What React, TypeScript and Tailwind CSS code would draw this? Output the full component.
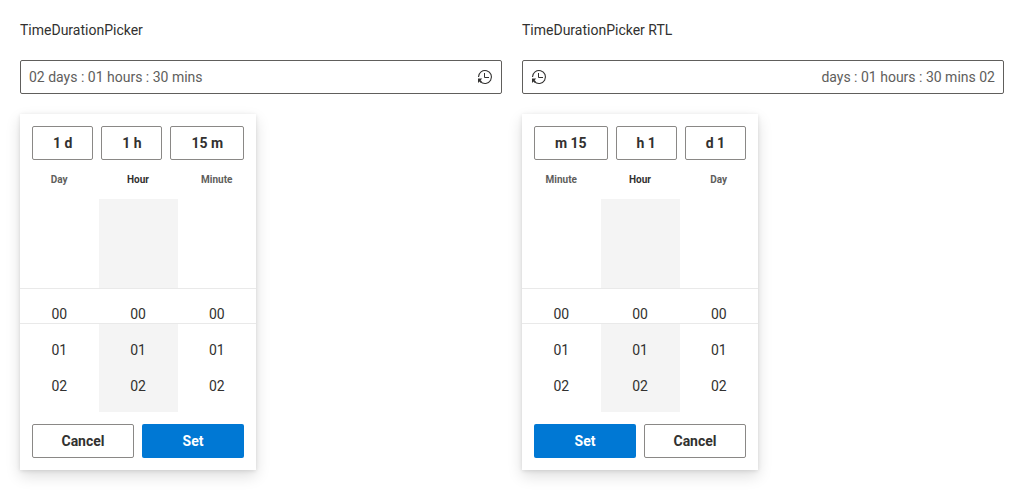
import { useId, useState } from 'react';
import clsx from 'clsx';

type Direction = 'ltr' | 'rtl';

const presets = ['1 d', '1 h', '15 m'];
const units = ['Day', 'Hour', 'Minute'];
const values = ['00', '01', '02'];

function DurationIcon() {
  return (
    <svg viewBox="0 0 16 16" className="size-4" fill="none" aria-hidden="true">
      <path d="M1.5 8A6.5 6.5 0 1 1 3.4 12.6" stroke="currentColor" strokeWidth="1.1" />
      <path d="M1 9.6V14l1.5-1.5 1.2 1.2 1.2-1.2-1.3-1.2L5.2 9.6z" fill="currentColor" />
      <path d="M7.5 4v4.5H12" stroke="currentColor" strokeWidth="1" />
    </svg>
  );
}

function DurationInput({ id, dir }: { id: string; dir: Direction }) {
  const [value, setValue] = useState('02 days : 01 hours : 30 mins');
  return (
    <div dir={dir} className="flex rounded-xs border border-[#605e5c] bg-white">
      <input
        id={id}
        type="text"
        value={value}
        onChange={(event) => setValue(event.target.value)}
        className="h-8 min-w-0 flex-1 bg-transparent px-2 text-sm text-[#605e5c] outline-none"
      />
      <button
        type="button"
        aria-label="Open duration picker"
        className="flex w-8 items-center justify-center text-[#323130]"
      >
        <DurationIcon />
      </button>
    </div>
  );
}

function DurationPopup({ dir }: { dir: Direction }) {
  const [active, setActive] = useState('Hour');
  const outlined =
    'h-[34px] rounded-xs border border-[#8a8886] bg-white text-sm font-bold text-[#323130]';
  return (
    <div
      dir={dir}
      className="flex w-[236px] flex-col bg-white shadow-[0_6px_14px_0_rgba(0,0,0,0.132),0_1px_4px_0_rgba(0,0,0,0.108)]"
    >
      <div className="flex gap-2 px-3 pt-3">
        {presets.map((preset) => (
          <button
            key={preset}
            type="button"
            className={clsx(outlined, 'flex-auto px-4 whitespace-nowrap')}
          >
            {preset}
          </button>
        ))}
      </div>
      <div className="relative mt-3 grid grid-cols-[1fr_79px_1fr]">
        <div className="absolute inset-x-0 top-[116px] z-10 h-9 border-y border-[#e9e9e9] bg-white" />
        {units.map((unit) => (
          <div
            key={unit}
            onMouseEnter={() => setActive(unit)}
            className="flex flex-col gap-3 text-center"
          >
            <span
              className={clsx(
                'text-[10px] leading-[15px] font-bold',
                unit === active ? 'text-[#323130]' : 'text-[#605e5c]',
              )}
            >
              {unit}
            </span>
            <ul
              aria-label={unit}
              className={clsx('h-[213px] pt-[97px]', unit === active && 'bg-[#f4f4f4]')}
            >
              {values.map((value) => (
                <li key={value} className="relative z-20 h-9 text-sm leading-9 text-[#323130]">
                  {value}
                </li>
              ))}
            </ul>
          </div>
        ))}
      </div>
      <div className="grid grid-cols-2 gap-2 p-3">
        <button type="button" className={outlined}>
          Cancel
        </button>
        <button
          type="button"
          className="h-[34px] rounded-xs bg-[#0078d4] text-sm font-bold text-white"
        >
          Set
        </button>
      </div>
    </div>
  );
}

function PickerExample({ title, dir }: { title: string; dir: Direction }) {
  const id = useId();
  return (
    <section className="flex flex-col gap-5">
      <label htmlFor={id} className="text-sm text-[#323130]">
        {title}
      </label>
      <DurationInput id={id} dir={dir} />
      <DurationPopup dir={dir} />
    </section>
  );
}

export default function App() {
  return (
    <main className="grid grid-cols-2 gap-5 bg-white p-5 font-[Roboto,sans-serif]">
      <PickerExample title="TimeDurationPicker" dir="ltr" />
      <PickerExample title="TimeDurationPicker RTL" dir="rtl" />
    </main>
  );
}
